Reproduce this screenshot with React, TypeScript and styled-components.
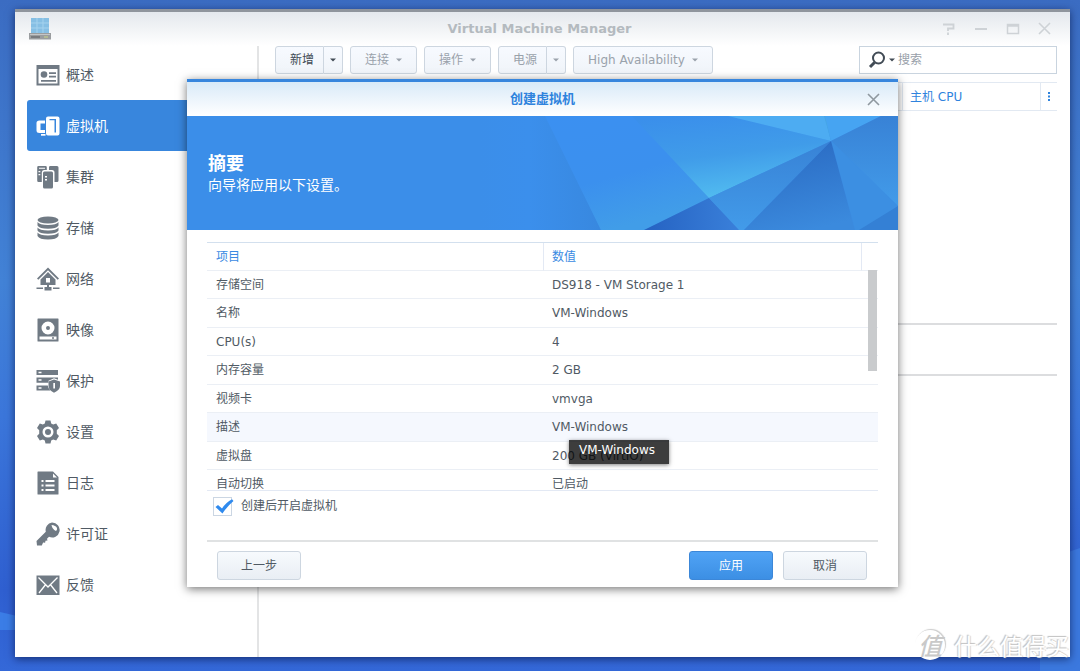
import React, { ReactNode } from "react";
import styled, { createGlobalStyle, css } from "styled-components";

const Global = createGlobalStyle`
  * { box-sizing: border-box; }
  html, body { margin: 0; padding: 0; }
  body, button, input, table {
    font-family: "DejaVu Sans", "Noto Sans CJK SC", sans-serif;
    font-size: 12px;
    line-height: 18px;
    color: #505a64;
  }
`;

const Desktop = styled.div`
  position: relative;
  min-height: 100vh;
  display: flex;
  padding: 9px 10px 14px 15px;
  overflow: hidden;
  background: linear-gradient(180deg, #3b6cc2 0%, #4282d6 42%, #3b76da 62%, #2f5fd0 88%, #3468d8 100%);
`;

const Facet = styled.svg`
  position: absolute;
  inset: 0;
  width: 100%;
  height: 100%;
`;

const Window = styled.main`
  position: relative;
  flex: 1;
  display: flex;
  flex-direction: column;
  background: #fff;
  border-top: 3px solid #8f959d;
  box-shadow: 0 2px 8px rgba(0, 10, 50, 0.6);
`;

const TitleBar = styled.header`
  height: 34px;
  display: grid;
  grid-template-columns: 1fr auto 1fr;
  align-items: center;
  padding: 0 19px 0 13px;
  background: linear-gradient(180deg, #e4e8ed, #fff);
`;

const Title = styled.h1`
  margin: 0;
  font-size: 13px;
  line-height: 20px;
  font-weight: 700;
  color: #b4babf;
`;

const WindowControls = styled.div`
  justify-self: end;
  display: flex;
  gap: 16px;
`;

const IconButton = styled.button`
  display: flex;
  padding: 0;
  border: 0;
  background: none;
`;

const Columns = styled.div`
  flex: 1;
  display: flex;
`;

const Sidebar = styled.nav`
  width: 244px;
  flex: none;
  padding: 3px 12px 0;
  border-right: 2px solid #e3e4e5;
`;

const NavItem = styled.a<{ $active?: boolean }>`
  display: flex;
  align-items: center;
  gap: 6px;
  height: 51px;
  padding-left: 9px;
  border-radius: 3px;
  font-size: 14px;
  line-height: 20px;
  text-decoration: none;
  color: #505a64;
  fill: #707a84;
  ${(p) => p.$active && css`
    background: #3886dd;
    color: #fff;
    fill: #fff;
  `}
`;

const Content = styled.section`
  flex: 1;
  min-width: 0;
  padding: 0 13px 0 16px;
`;

const Toolbar = styled.div`
  display: flex;
  gap: 7px;
  height: 28px;
`;

const buttonFace = css`
  border: 1px solid #cdd6e0;
  border-radius: 3px;
  background: linear-gradient(180deg, #f7fafd, #e9eef4);
`;

const ToolButton = styled.button<{ $on?: boolean }>`
  ${buttonFace}
  background: linear-gradient(180deg, #f7faff, #f0f4f9);
  display: flex;
  align-items: center;
  gap: 7px;
  padding: 0 14px;
  white-space: nowrap;
  color: ${(p) => (p.$on ? "#414b55" : "#9aa2ab")};
  fill: currentColor;
`;

const Split = styled.div`
  display: flex;
  ${ToolButton}:first-child { border-radius: 3px 0 0 3px; padding: 0 9px 0 14px; }
  ${ToolButton}:last-child { border-radius: 0 3px 3px 0; border-left: 0; padding: 0 6px; }
`;

const Search = styled.label`
  margin-left: auto;
  width: 198px;
  display: flex;
  align-items: center;
  gap: 3px;
  padding: 0 8px;
  border: 1px solid #c9d4df;
  color: #414b55;
`;

const SearchInput = styled.input`
  flex: 1;
  min-width: 0;
  padding: 0;
  border: 0;
  outline: 0;
  background: none;
  &::placeholder { color: #98a0a9; opacity: 1; }
`;

const HostPanel = styled.div<{ $height: number }>`
  height: ${(p) => p.$height}px;
  border-bottom: 2px solid #dcdddf;
`;

const HostTable = styled.table`
  width: 100%;
  margin-top: 8px;
  border-spacing: 0;
  table-layout: fixed;
  th {
    height: 29px;
    padding: 0 7px;
    text-align: left;
    font-weight: 400;
    color: #2f83dd;
    border: solid #e2e9f2;
    border-width: 1px 0 1px 1px;
  }
  th:first-child { border-left: 0; }
`;

const Overlay = styled.div`
  position: absolute;
  inset: -3px 0 0;
  display: flex;
  align-items: center;
  justify-content: center;
`;

const Dialog = styled.div`
  width: 711px;
  max-width: 90%;
  background: #fff;
  border-top: 3px solid #3886dd;
  box-shadow: 0 2px 9px rgba(0, 0, 0, 0.55);
`;

const DialogHead = styled.header`
  display: grid;
  grid-template-columns: 1fr auto 1fr;
  align-items: center;
  height: 34px;
  padding: 0 18px;
  background: linear-gradient(180deg, #d9eaf8, #fff);
  h2 {
    grid-column: 2;
    margin: 0;
    font-size: 13px;
    line-height: 20px;
    font-weight: 700;
    color: #2f83dd;
  }
  button { justify-self: end; }
`;

const Banner = styled.div`
  position: relative;
  height: 114px;
  padding: 38px 21px 0;
  background: #3b8ee9;
  color: #fff;
`;

const BannerArt = styled.svg`
  position: absolute;
  top: 0;
  right: 0;
  width: 418px;
  height: 114px;
`;

const BannerTitle = styled.h3`
  margin: 0;
  font-size: 18px;
  line-height: 20px;
  font-weight: 700;
`;

const BannerText = styled.p`
  margin: 0;
  font-size: 14px;
  line-height: 22px;
`;

const DialogBody = styled.div`
  padding: 12px 20px 7px;
`;

const TableBox = styled.div`
  position: relative;
  height: 249px;
  overflow: hidden;
  border-top: 1px solid #d3e0ee;
  border-bottom: 1px solid #e3e9f4;
`;

const SummaryTable = styled.table`
  width: 100%;
  border-spacing: 0;
  table-layout: fixed;
  th, td {
    height: 28px;
    padding: 0 9px;
    text-align: left;
    font-weight: 400;
    line-height: 18px;
    border-bottom: 1px solid #ebeff5;
  }
  th { color: #3a8ae2; }
  th:first-child { width: 336px; }
  th:last-child { width: 17px; padding: 0; }
  th + th { border-left: 1px solid #e3e9f4; padding-left: 8px; }
  tbody tr:nth-child(even) td { height: 29px; }
`;

const Row = styled.tr<{ $hover?: boolean }>`
  background: ${(p) => (p.$hover ? "#f5f8fe" : "#fff")};
`;

const Thumb = styled.div`
  position: absolute;
  top: 27px;
  right: 1px;
  width: 9px;
  height: 101px;
  background: #c9cbcd;
`;

const TipAnchor = styled.span`
  position: relative;
`;

const Tooltip = styled.span`
  position: absolute;
  z-index: 1;
  top: 20px;
  left: 17px;
  height: 24px;
  padding: 0 14px 0 10px;
  line-height: 20px;
  white-space: nowrap;
  color: #fff;
  background: rgba(0, 0, 0, 0.76);
  box-shadow: 0 1px 4px rgba(0, 0, 0, 0.5);
`;

const CheckLabel = styled.label`
  display: flex;
  align-items: center;
  gap: 9px;
  height: 30px;
  padding-left: 6px;
`;

const CheckBox = styled.span`
  position: relative;
  display: flex;
  input {
    appearance: none;
    width: 19px;
    height: 19px;
    margin: 0;
    border: 1px solid #cbd6e3;
    background: #fff;
  }
  svg {
    position: absolute;
    left: 2px;
    top: 2px;
    pointer-events: none;
  }
`;

const DialogFoot = styled.footer`
  display: flex;
  gap: 10px;
  margin-top: 19px;
  padding: 9px 11px 0 10px;
  border-top: 2px solid #e0e2e3;
`;

const Button = styled.button<{ $primary?: boolean }>`
  ${buttonFace}
  width: 84px;
  height: 29px;
  padding: 0;
  &:first-child { margin-right: auto; }
  ${(p) => p.$primary && css`
    color: #fff;
    border-color: #3c87d8;
    background: linear-gradient(180deg, #50a3f5, #3c8fe4);
  `}
`;

const Watermark = styled.div`
  position: absolute;
  right: 11px;
  bottom: 11px;
  display: flex;
  align-items: center;
  gap: 9px;
  font-family: "Noto Sans CJK SC", sans-serif;
  font-size: 23px;
  line-height: 30px;
  color: #fff;
  text-shadow: -1px -1px 1px #c0c0c0, 1px 0 1px #d4d4d4;
`;

const Seal = styled.span`
  width: 30px;
  height: 30px;
  border-radius: 50%;
  text-align: center;
  font-size: 24px;
  font-style: italic;
  font-weight: 500;
  color: #c9c9c9;
  background: #fff;
  box-shadow: 1px -1px 1px #ccc;
  text-shadow: none;
`;

const Svg = ({ children, size = 24 }: { children: ReactNode; size?: number }) => (
  <svg width={size} height={size} viewBox="0 0 24 24" aria-hidden="true">{children}</svg>
);

const Caret = () => (
  <svg width="6" height="4" viewBox="0 0 6 4" aria-hidden="true"><path d="M0 .5h6L3 3.500z" fill="currentColor" /></svg>
);

const Cross = ({ color }: { color: string }) => (
  <svg width="13" height="13" viewBox="0 0 13 13" aria-hidden="true">
    <path d="M1 1l11 11M12 1L1 12" stroke={color} strokeWidth="1.6" />
  </svg>
);

const icons: Record<string, ReactNode> = {
  overview: <>
    <path fillRule="evenodd" d="M.5 2h23v20.500H.5zM2.500 6v14.500h19V6z" />
    <circle cx="8" cy="11.500" r="3.300" />
    <path d="M13 9.300h7v1.700h-7zM13 12.700h7v1.700h-7zM5 17h15v1.700H5z" />
  </>,
  vm: <>
    <path fillRule="evenodd" d="M3.500 6.500H9v3H4.500v6.500H9v3H3.500Q.5 19 .5 16.500V9Q.5 6.500 3.500 6.500z" />
    <path d="M5 20h4.500v1.700H5z" />
    <path fillRule="evenodd" d="M12 2.500h9.500q2 0 2 2v15q0 2-2 2H12q-2 0-2-2v-15q0-2 2-2zm1.500 2.500v1.300h5V18.500H20V5z" />
  </>,
  cluster: <>
    <path fillRule="evenodd" d="M2.500 1h7q1.300 0 1.300 1.300V5H8Q5.800 5 5.800 7.500V17H2.500Q1.200 17 1.200 15.500V2.300Q1.200 1 2.500 1zM2.500 6v1.300h1.800V6zm0 3v1.300h1.800V9zM3 2.800v1h6v-1z" />
    <path d="M14.300 1H21q1.500 0 1.500 1.500v13Q22.500 17 21 17h-2.500V7.500Q18.500 5 16 5h-3V2.300Q13 1 14.300 1z" />
    <path fillRule="evenodd" d="M8.500 6.500h7Q17 6.500 17 8v14q0 1.500-1.500 1.500h-7Q7 23.500 7 22V8q0-1.500 1.500-1.500zM9 11v1.500h2V11zm0 3v1.500h2V14z" />
  </>,
  storage: <>
    <ellipse cx="12" cy="4" rx="10.500" ry="3.500" />
    <path d="M1.500 6q2 3 10.500 3t10.500-3v3.500q-2 3.300-10.500 3.300T1.500 9.500zM1.500 11.500q2 3 10.500 3t10.500-3v3q-2 3.300-10.500 3.300T1.500 14.500zM1.500 16.500q2 3 10.500 3t10.500-3v3.500q-2 3.500-10.500 3.500T1.500 20z" />
  </>,
  network: <>
    <path d="M12 .5l11 11-1.300 1.300L12 3.300l-9.700 9.500L1 11.500z" />
    <path fillRule="evenodd" d="M12 5l7.500 7.500V18h-15v-5.500zM10 11v4.500h4V11z" />
    <path d="M11 18h2v2h-2zM8.500 20h7v3.500h-7zM.5 20.500h6.500V22H.5zM17 20.500h6.500V22H17z" />
  </>,
  image: <path fillRule="evenodd" d="M2 .5h20q.5 0 .5.500v22q0 .500-.5.500H2q-.5 0-.5-.500V1Q1.500.5 2 .5zM12 3.500a6.500 6.500 0 1 0 0 13 6.500 6.500 0 0 0 0-13zM12 8a2 2 0 1 1 0 4 2 2 0 0 1 0-4zM3.500 18.500v3h17v-3zm12.500.8h2v1.500h-2z" />,
  protect: <>
    <path fillRule="evenodd" d="M.5 1H22v5H.5zm2 1.800v1.500h3V2.800zM.5 8.500H22v2.200l-4-1.500-5.500 2.500v2H.5zm2 1.800v1.500h3v-1.500zM.5 16.500h11.300q.2 3 2.700 5H.5zm2 1.800v1.500h3v-1.500z" />
    <path fillRule="evenodd" d="M18 10.500l6 2v4.500q0 4-6 6.700-5.500-2.700-5.500-6.700v-4.500zM17.300 14v5.500h1.700V14z" />
  </>,
  settings: <path fillRule="evenodd" d="M9.500.5h5l.7 3 2 1.100 3-1 2.800 4.500-2.200 2.200v3.400l2.200 2.200-2.800 4.500-3-1-2 1.100-.7 3h-5l-.7-3-2-1.100-3 1L1 15.900l2.200-2.200v-3.400L1 8.100l2.800-4.500 3 1 2-1.100zM12 6.500a5.500 5.500 0 1 0 0 11 5.500 5.500 0 0 0 0-11zM12 9a3 3 0 1 1 0 6 3 3 0 0 1 0-6z" />,
  log: <path fillRule="evenodd" d="M2 .5h15l5.500 5.500v17q0 .500-.5.500H2q-.5 0-.5-.500V1Q1.500.5 2 .5zM17 2.500v4h4zM5.500 9v2h2V9zm4 0v2h9V9zm-4 4.500v2h2v-2zm4 0v2h9v-2zm-4 4.500v2h2v-2zm4 0v2h9v-2z" />,
  license: <path fillRule="evenodd" d="M16 .5a7.500 7.500 0 1 1-3 14.300l-2 2 .5 1.700-2 .300-.4 2-2-.2-1.300 2.900H1L.5 19l9.300-9.300A7.500 7.500 0 0 1 16 .5zM15.500 3a8 8 0 0 0 4.500 6q1.700-1.500.7-3.500t-5.200-2.500z" />,
  feedback: <>
    <path d="M.5 2.500h23V22H.5z" />
    <path d="M2.500 4.500L12 14l9.500-9.500M3 20l6.300-8M21 20l-6.300-8" fill="none" stroke="#fff" strokeWidth="1.300" />
  </>,
};

const navItems = [
  ["overview", "概述"],
  ["vm", "虚拟机"],
  ["cluster", "集群"],
  ["storage", "存储"],
  ["network", "网络"],
  ["image", "映像"],
  ["protect", "保护"],
  ["settings", "设置"],
  ["log", "日志"],
  ["license", "许可证"],
  ["feedback", "反馈"],
];

const rows = [
  ["存储空间", "DS918 - VM Storage 1"],
  ["名称", "VM-Windows"],
  ["CPU(s)", "4"],
  ["内存容量", "2 GB"],
  ["视频卡", "vmvga"],
  ["描述", "VM-Windows"],
  ["虚拟盘", "200 GB (VirtIO)"],
  ["自动切换", "已启动"],
];

const AppLogo = () => (
  <svg width="24" height="24" viewBox="0 0 24 24" aria-hidden="true">
    <path d="M3 1h18v15H3z" fill="#86bfe4" />
    <path d="M3 6h18M3 11h18M9 1v15M15 1v15" stroke="#a4d2ee" strokeWidth="1" />
    <path d="M1 16h22v6.500H1z" fill="#9a9d9f" />
    <path d="M2 17.500h20" stroke="#c4c6c7" />
    <path d="M3 20h9" stroke="#6e7173" strokeWidth="1.500" />
    <path d="M16 20h4" stroke="#b9c38f" strokeWidth="1.500" />
  </svg>
);

const Art = () => (
  <BannerArt viewBox="480 116 418 114" preserveAspectRatio="none" aria-hidden="true">
    <defs>
      <linearGradient id="ga" x1="0" x2="1"><stop offset="0" stopColor="#3b8ee9" /><stop offset=".4" stopColor="#3b8fec" /><stop offset="1" stopColor="#3888df" /></linearGradient>
      <linearGradient id="gb" x1="0" y1="0" x2=".4" y2="1"><stop offset="0" stopColor="#3b90f1" /><stop offset=".6" stopColor="#3b90ee" /><stop offset="1" stopColor="#419de8" /></linearGradient>
      <linearGradient id="gc" x1=".2" y1="0" x2=".5" y2="1"><stop offset="0" stopColor="#3a8feb" /><stop offset=".5" stopColor="#409ce9" /><stop offset="1" stopColor="#52bdf0" /></linearGradient>
      <linearGradient id="gd" x1="0" y1="0" x2="1" y2="0"><stop offset="0" stopColor="#2562c2" /><stop offset="1" stopColor="#3a80da" /></linearGradient>
      <linearGradient id="ge" x1="0" y1="0" x2="0" y2="1"><stop offset="0" stopColor="#3882d6" /><stop offset="1" stopColor="#429be9" /></linearGradient>
      <linearGradient id="gf" x1=".3" y1="0" x2=".6" y2="1"><stop offset="0" stopColor="#2a6ac2" /><stop offset="1" stopColor="#3b8add" /></linearGradient>
    </defs>
    <path d="M480 116h66l55 114H480z" fill="url(#ga)" />
    <path d="M545 116h92l72 82-64 32h-44z" fill="url(#gb)" />
    <path d="M632 116h96l103 25-122 57z" fill="url(#gc)" />
    <path d="M728 116h97l6 25z" fill="#4dacf2" />
    <path d="M824 116h4l3 25z" fill="#46a6e4" />
    <path d="M825 116h56l-50 25z" fill="#46a4f2" />
    <path d="M831 141l50-25h17v90z" fill="url(#ge)" />
    <path d="M831 141l67 65v5l-38 19h-5z" fill="#3c8fe2" />
    <path d="M898 206v24h-39z" fill="#3480d5" />
    <path d="M644 230l65-32 31 32z" fill="url(#gd)" />
    <path d="M709 198l122-57-87 89h-5z" fill="url(#ge)" />
    <path d="M831 141l24 89H744z" fill="url(#gf)" />
  </BannerArt>
);

export default function App() {
  return (
    <Desktop>
      <Global />
      <Facet viewBox="0 0 1080 671" preserveAspectRatio="none" aria-hidden="true">
        <path d="M0 612l60 14v4H0z" fill="#3b7de6" />
        <path d="M1040 562l40-14v123h-40z" fill="#3b78de" />
      </Facet>
      <Window>
        <TitleBar>
          <AppLogo />
          <Title>Virtual Machine Manager</Title>
          <WindowControls>
            <IconButton aria-label="帮助"><svg width="18" height="14" viewBox="0 0 18 14"><path d="M3 2.500h10.500v4H8v2.500M8 10.500v2.500" fill="none" stroke="#ced2d6" strokeWidth="1.800" /></svg></IconButton>
            <IconButton aria-label="最小化"><svg width="14" height="14" viewBox="0 0 14 14"><path d="M1 7h12" stroke="#ced2d6" strokeWidth="2" /></svg></IconButton>
            <IconButton aria-label="最大化"><svg width="18" height="14" viewBox="0 0 18 14"><path d="M3.500 2.500h11v9h-11z M3 4h12" fill="none" stroke="#ced2d6" strokeWidth="1.500" /></svg></IconButton>
            <IconButton aria-label="关闭"><Cross color="#ced2d6" /></IconButton>
          </WindowControls>
        </TitleBar>
        <Columns>
          <Sidebar>
            {navItems.map(([id, label]) => (
              <NavItem key={id} href={"#" + id} $active={id === "vm"}>
                <Svg>{icons[id]}</Svg>{label}
              </NavItem>
            ))}
          </Sidebar>
          <Content>
            <Toolbar>
              <Split>
                <ToolButton $on>新增</ToolButton>
                <ToolButton $on aria-label="更多新增选项"><Caret /></ToolButton>
              </Split>
              <ToolButton>连接 <Caret /></ToolButton>
              <ToolButton>操作 <Caret /></ToolButton>
              <Split>
                <ToolButton>电源</ToolButton>
                <ToolButton aria-label="更多电源选项"><Caret /></ToolButton>
              </Split>
              <ToolButton>High Availability <Caret /></ToolButton>
              <Search aria-label="搜索">
                <svg width="18" height="18" viewBox="0 0 18 18" aria-hidden="true">
                  <circle cx="10.500" cy="7" r="5.500" fill="none" stroke="#414b55" strokeWidth="2" />
                  <path d="M6.500 11.500L2 16" stroke="#414b55" strokeWidth="3" />
                </svg>
                <Caret />
                <SearchInput placeholder="搜索" />
              </Search>
            </Toolbar>
            <HostPanel $height={243}>
              <HostTable>
                <colgroup><col /><col style={{ width: 138 }} /><col style={{ width: 17 }} /></colgroup>
                <thead><tr><th /><th>主机 CPU</th><th><svg width="3" height="9" viewBox="0 0 3 9"><path d="M0 0h2v2H0zM0 3.500h2v2H0zM0 7h2v2H0z" fill="#2f83dd" /></svg></th></tr></thead>
              </HostTable>
            </HostPanel>
            <HostPanel $height={51} />
          </Content>
        </Columns>
        <Overlay>
          <Dialog role="dialog" aria-label="创建虚拟机">
            <DialogHead>
              <h2>创建虚拟机</h2>
              <IconButton aria-label="关闭"><Cross color="#8f989f" /></IconButton>
            </DialogHead>
            <Banner>
              <Art />
              <BannerTitle>摘要</BannerTitle>
              <BannerText>向导将应用以下设置。</BannerText>
            </Banner>
            <DialogBody>
              <TableBox>
                <SummaryTable>
                  <thead><tr><th>项目</th><th>数值</th><th /></tr></thead>
                  <tbody>
                    {rows.map(([name, value]) => (
                      <Row key={name} $hover={name === "描述"}>
                        <td>{name}</td>
                        <td colSpan={2}>
                          {name === "描述" ? <TipAnchor>{value}<Tooltip role="tooltip">{value}</Tooltip></TipAnchor> : value}
                        </td>
                      </Row>
                    ))}
                  </tbody>
                </SummaryTable>
                <Thumb />
              </TableBox>
              <CheckLabel>
                <CheckBox>
                  <input type="checkbox" defaultChecked />
                  <svg width="19" height="15" viewBox="0 0 19 15"><path d="M.5 8l2.500-2 4 3.500Q11 3.500 17 .300L18.500 2Q12 7.500 7.500 14.500z" fill="#2f8aee" /></svg>
                </CheckBox>
                创建后开启虚拟机
              </CheckLabel>
              <DialogFoot>
                <Button>上一步</Button>
                <Button $primary>应用</Button>
                <Button>取消</Button>
              </DialogFoot>
            </DialogBody>
          </Dialog>
        </Overlay>
      </Window>
      <Watermark><Seal>值</Seal>什么值得买</Watermark>
    </Desktop>
  );
}
